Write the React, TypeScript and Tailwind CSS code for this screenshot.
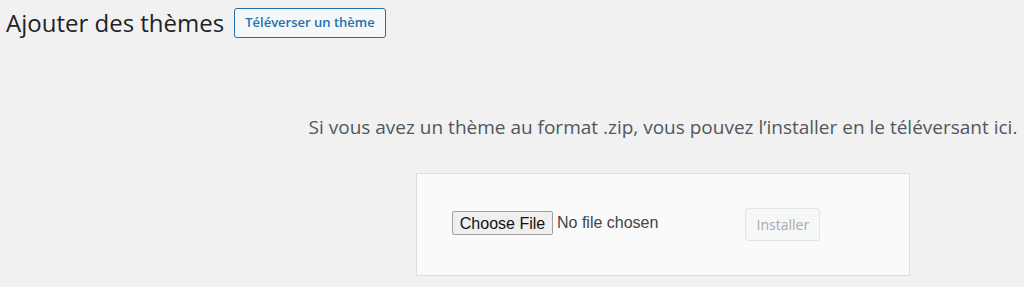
export default function App() {
  return (
    <div className="h-[287px] w-[1024px] overflow-hidden bg-[#f1f1f1] font-['Open_Sans',sans-serif] text-[#1d2327]">
      <div className="flex items-center pl-[6px] pt-[8px]">
        <h1 className="text-[24px] leading-[30px] font-normal text-[#1d2327]">Ajouter des thèmes</h1>
        <button
          type="button"
          className="ml-[10px] h-[30px] rounded-[3px] border border-[#2271b1] bg-[#f6f7f7] px-[10px] text-[13px] font-semibold text-[#2271b1]"
        >
          Téléverser un thème
        </button>
      </div>

      <div className="flex flex-col items-center pl-[302px]">
        <p className="mt-[76px] text-[19px] leading-[26px] text-[#50575e]">
          Si vous avez un thème au format .zip, vous pouvez l’installer en le téléversant ici.
        </p>
        <div className="mt-[33px] flex h-[103px] w-[494px] items-center border border-[#dcdcde] bg-[#fafafa] pl-[35px]">
          <button
            type="button"
            className="mb-[4px] h-[24px] w-[101px] rounded-[2px] border border-[#a0a0a0] bg-[#efefef] font-['Liberation_Sans',sans-serif] text-[16px] text-[#111]"
          >
            Choose File
          </button>
          <span className="mb-[4px] ml-[4px] font-['Liberation_Sans',sans-serif] text-[16px] text-[#444]">No file chosen</span>
          <button
            type="button"
            disabled
            className="ml-[87px] h-[33px] w-[75px] rounded-[3px] border border-[#e2e4e7] bg-[#f6f7f7] text-[14px] text-[#a7aaad]"
          >
            Installer
          </button>
        </div>
      </div>
    </div>
  )
}
